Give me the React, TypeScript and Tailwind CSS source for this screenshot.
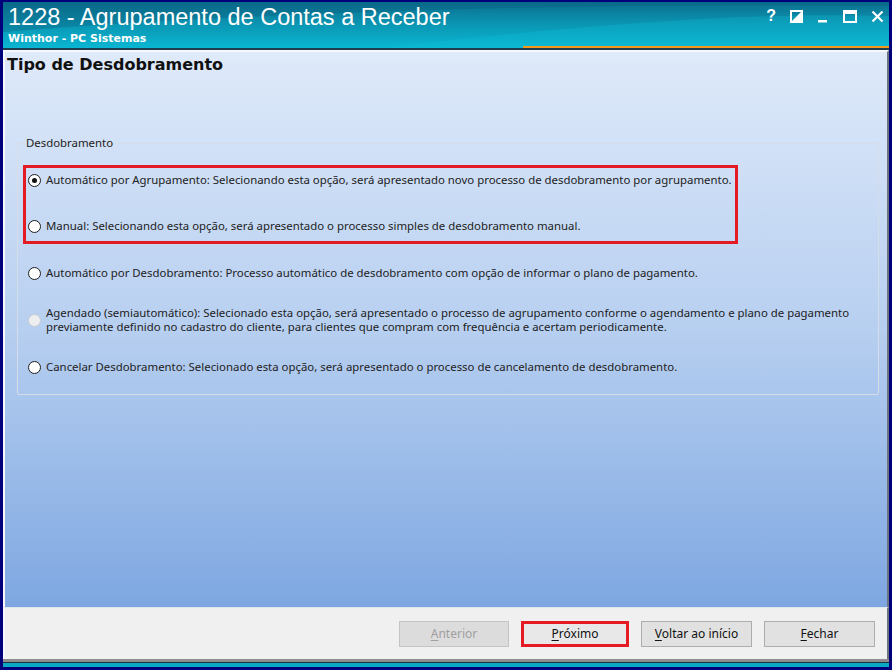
import React from 'react';

type Opcao = {
  id: string;
  linhas: string[];
  marcado?: boolean;
  desabilitado?: boolean;
};

const opcoes: Opcao[] = [
  {
    id: 'agrup',
    linhas: [
      'Automático por Agrupamento: Selecionando esta opção, será apresentado novo processo de desdobramento por agrupamento.',
    ],
    marcado: true,
  },
  {
    id: 'manual',
    linhas: ['Manual: Selecionando esta opção, será apresentado o processo simples de desdobramento manual.'],
  },
  {
    id: 'autodesd',
    linhas: [
      'Automático por Desdobramento: Processo automático de desdobramento com opção de informar o plano de pagamento.',
    ],
  },
  {
    id: 'agendado',
    linhas: [
      'Agendado (semiautomático): Selecionado esta opção, será apresentado o processo de agrupamento conforme o agendamento e plano de pagamento',
      'previamente definido no cadastro do cliente, para clientes que compram com frequência e acertam periodicamente.',
    ],
    desabilitado: true,
  },
  {
    id: 'cancelar',
    linhas: ['Cancelar Desdobramento: Selecionado esta opção, será apresentado o processo de cancelamento de desdobramento.'],
  },
];

const Radio = ({ marcado, desabilitado }: { marcado?: boolean; desabilitado?: boolean }) => (
  <span
    className={
      desabilitado
        ? 'flex h-[13px] w-[13px] shrink-0 items-center justify-center rounded-full border border-[#c8ccd2] bg-[#eceef0]'
        : 'flex h-[13px] w-[13px] shrink-0 items-center justify-center rounded-full border border-[#1e1e1e] bg-white'
    }
  >
    {marcado && <span className="h-[5px] w-[5px] rounded-full bg-[#111]" />}
  </span>
);

const LinhaOpcao = ({ op }: { op: Opcao }) => (
  <div className="flex items-center gap-[5px] whitespace-nowrap">
    <Radio marcado={op.marcado} desabilitado={op.desabilitado} />
    <div className="leading-[14px] text-[#222]">
      {op.linhas.map((l) => (
        <div key={l}>{l}</div>
      ))}
    </div>
  </div>
);

const Botao = ({
  rotulo,
  atalho,
  desabilitado,
  destaque,
}: {
  rotulo: string;
  atalho: number;
  desabilitado?: boolean;
  destaque?: boolean;
}) => {
  const antes = rotulo.slice(0, atalho);
  const letra = rotulo.slice(atalho, atalho + 1);
  const depois = rotulo.slice(atalho + 1);
  return (
    <div
      className={
        destaque
          ? 'flex h-[26px] w-[108px] items-center justify-center border-[3px] border-[#e41b23] bg-[#e8e8e8] text-[#111]'
          : desabilitado
            ? 'flex h-[26px] w-[110px] items-center justify-center border border-[#c4c4c4] bg-[#dcdcdc] text-[#a0a0a0]'
            : 'flex h-[26px] w-[111px] items-center justify-center border border-[#adadad] bg-[#e1e1e1] text-[#111]'
      }
    >
      <span>
        {antes}
        <span className="underline underline-offset-2">{letra}</span>
        {depois}
      </span>
    </div>
  );
};

export default function App() {
  return (
    <div
      className="flex h-[670px] w-[892px] flex-col overflow-hidden bg-[#00007c] px-[3px] pt-[2px] pb-[3px]"
      style={{ fontFamily: '"Noto Sans", sans-serif' }}
    >
      {/* barra de título */}
      <div className="relative h-[46px] shrink-0 overflow-hidden bg-gradient-to-b from-[#0b6f8e] via-[#0a97b4] to-[#0ab6d2]">
        <svg className="absolute inset-0" width="886" height="46" viewBox="0 0 886 46">
          <path d="M0 30 C 250 10, 600 0, 886 4 L 886 0 L 0 0 Z" fill="#0a5f7f" opacity="0.35" />
          <path d="M380 46 C 600 20, 760 10, 886 14 L 886 46 Z" fill="#0fc3dd" opacity="0.25" />
        </svg>
        <div
          className="absolute left-[5px] top-[1px] text-[23.5px] leading-[28px] text-white"
          style={{ fontFamily: '"Liberation Sans", Arial, sans-serif' }}
        >
          1228 - Agrupamento de Contas a Receber
        </div>
        <div
          className="absolute left-[5px] top-[30px] text-[11px] font-bold leading-[13px] text-white"
          style={{ fontFamily: '"DejaVu Sans", Verdana, sans-serif' }}
        >
          Winthor - PC Sistemas
        </div>
        <div className="absolute right-[5px] top-[6px] flex items-center gap-[14px] text-white">
          <span className="text-[16px] font-bold leading-none" style={{ fontFamily: '"Liberation Sans", sans-serif' }}>
            ?
          </span>
          <svg width="13" height="13" viewBox="0 0 13 13">
            <rect x="1" y="1" width="11" height="11" fill="none" stroke="white" strokeWidth="2" />
            <path d="M1 12 L12 1 L12 12 Z" fill="white" />
          </svg>
          <svg width="12" height="13" viewBox="0 0 12 13">
            <rect x="1" y="10" width="9" height="2.5" fill="white" />
          </svg>
          <svg width="14" height="13" viewBox="0 0 14 13">
            <rect x="1" y="1" width="12" height="11" fill="none" stroke="white" strokeWidth="2" />
            <rect x="1" y="1" width="12" height="3" fill="white" />
          </svg>
          <svg width="13" height="13" viewBox="0 0 13 13">
            <path d="M1.5 1.5 L11.5 11.5 M11.5 1.5 L1.5 11.5" stroke="white" strokeWidth="2.2" />
          </svg>
        </div>
        <div className="absolute bottom-0 left-[520px] right-0 h-[2px] bg-[#f39a1c]" />
      </div>
      <div className="h-[2px] shrink-0 bg-[#1f3e4c]" />

      {/* corpo */}
      <div className="flex min-h-0 flex-1 flex-col border-l-2 border-t-2 border-r-2 border-l-[#f6f8fb] border-t-[#f6f8fb] border-r-[#6d7680] bg-gradient-to-b from-[#dfeafa] via-[#b7cff0] to-[#7ea7e1]">
        <div
          className="px-[2px] pt-[1px] text-[16px] font-bold leading-[24px] text-[#111]"
          style={{ fontFamily: '"DejaVu Sans", Verdana, sans-serif' }}
        >
          Tipo de Desdobramento
        </div>

        <div className="ml-[12px] mr-[8px] mt-[66px] h-[252px] rounded-[2px] border border-[#d6dde6] text-[11.4px]">
          <div className="-mt-[9px] ml-[6px] w-fit px-[2px] leading-[16px] text-[#222]">Desdobramento</div>
          <div className="ml-[5px] mr-[140px] mt-[14px] flex h-[79px] flex-col gap-[32px] border-[3px] border-[#e41b23] pl-[2px] pt-[5px]">
            <LinhaOpcao op={opcoes[0]} />
            <LinhaOpcao op={opcoes[1]} />
          </div>
          <div className="ml-[10px] mt-[22px]">
            <LinhaOpcao op={opcoes[2]} />
          </div>
          <div className="ml-[10px] mt-[26px]">
            <LinhaOpcao op={opcoes[3]} />
          </div>
          <div className="ml-[10px] mt-[26px]">
            <LinhaOpcao op={opcoes[4]} />
          </div>
        </div>
        <div className="flex-1" />
      </div>

      {/* rodapé com botões */}
      <div className="flex h-[52px] shrink-0 items-center justify-end gap-[12px] border-l-2 border-r-2 border-t border-l-[#f6f8fb] border-r-[#6d7680] border-t-[#dfe6ee] bg-[#f0f0f0] pr-[12px] text-[12px]">
        <Botao rotulo="Anterior" atalho={0} desabilitado />
        <Botao rotulo="Próximo" atalho={0} destaque />
        <Botao rotulo="Voltar ao início" atalho={0} />
        <Botao rotulo="Fechar" atalho={0} />
      </div>
      <div className="h-[3px] shrink-0 bg-[#8e8e8e]" />
      <div className="h-[1px] shrink-0 bg-[#1a3340]" />
      <div className="h-[4px] shrink-0 bg-[#0aa9c4]" />
    </div>
  );
}
